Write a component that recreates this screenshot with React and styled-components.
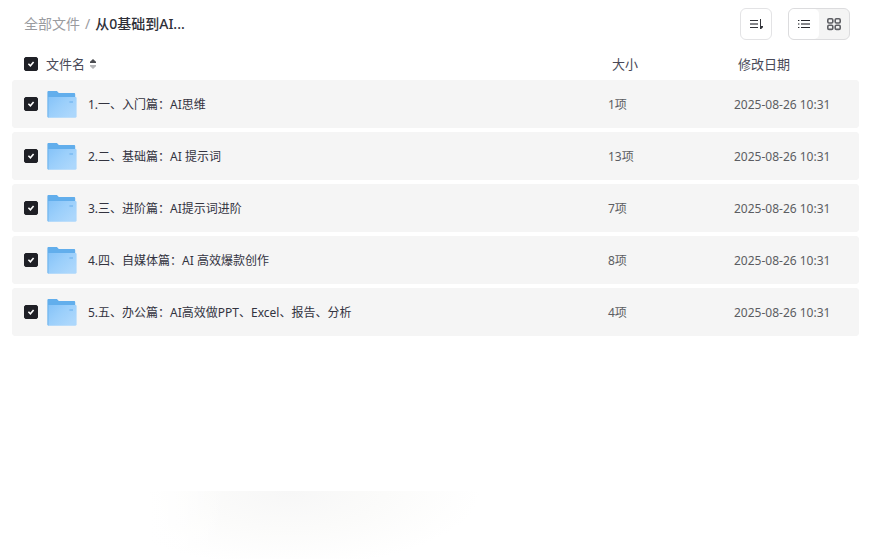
import React, { useState } from "react";
import styled, { createGlobalStyle } from "styled-components";

const FOLDERS = [
  { id: 1, name: "1.一、入门篇：AI思维", size: "1项", date: "2025-08-26 10:31" },
  { id: 2, name: "2.二、基础篇：AI 提示词", size: "13项", date: "2025-08-26 10:31" },
  { id: 3, name: "3.三、进阶篇：AI提示词进阶", size: "7项", date: "2025-08-26 10:31" },
  { id: 4, name: "4.四、自媒体篇：AI 高效爆款创作", size: "8项", date: "2025-08-26 10:31" },
  {
    id: 5,
    name: "5.五、办公篇：AI高效做PPT、Excel、报告、分析",
    size: "4项",
    date: "2025-08-26 10:31",
  },
];

const FolderIcon = () => (
  <svg width="32" height="32" viewBox="0 0 32 32" fill="none" aria-hidden="true">
    <defs>
      <linearGradient id="folderFront" x1="3" y1="9" x2="22" y2="30" gradientUnits="userSpaceOnUse">
        <stop stopColor="#86c3f8" />
        <stop offset="0.5" stopColor="#9bcffb" />
        <stop offset="1" stopColor="#acd7fc" />
      </linearGradient>
    </defs>
    <path
      d="M1.4 4.2C1.4 3.5 1.9 3 2.6 3H10.4C10.8 3 11.1 3.1 11.4 3.4L12.8 5H28C28.7 5 29.2 5.5 29.2 6.2V10H3V29.6H2.6C1.9 29.6 1.4 29.1 1.4 28.4V4.2Z"
      fill="#62aeec"
    />
    <path d="M2.4 9H29.7C30.2 9 30.6 9.4 30.6 9.9V28.5C30.6 29.2 30.1 29.7 29.4 29.7H2.4V9Z" fill="url(#folderFront)" />
    <path d="M23.4 13H27V15H23.4Z" fill="#84c0f4" />
  </svg>
);

const SortIcon = () => (
  <svg width="16" height="16" viewBox="0 0 16 16" fill="none" strokeWidth="1" aria-hidden="true">
    <path d="M2 4.5H10M2 11.5H10" stroke="#33343a" />
    <path d="M2 8H10" stroke="#85868a" strokeWidth="2" />
    <path d="M12.5 3V12.5" stroke="#33343a" />
    <path d="M12 13V10H15V11.2L13.2 13Z" fill="#33343a" />
  </svg>
);

const ListIcon = () => (
  <svg width="16" height="16" viewBox="0 0 16 16" fill="none" strokeWidth="1" aria-hidden="true">
    <path d="M2 4.5H3.4M5 4.5H14M2 11.5H3.4M5 11.5H14" stroke="#25262b" />
    <path d="M2 8H3.4M5 8H14" stroke="#85868a" strokeWidth="2" />
  </svg>
);

const GridIcon = () => (
  <svg width="16" height="16" viewBox="0 0 16 16" fill="none" stroke="#5e5f64" strokeWidth="1.6" aria-hidden="true">
    <rect x="1.8" y="2.8" width="5" height="4.2" rx="1.2" />
    <rect x="9.2" y="2.8" width="5" height="4.2" rx="1.2" />
    <rect x="1.8" y="9.2" width="5" height="4.2" rx="1.2" />
    <rect x="9.2" y="9.2" width="5" height="4.2" rx="1.2" />
  </svg>
);

const SortArrows = () => (
  <svg width="8" height="12" viewBox="0 0 8 12" aria-hidden="true">
    <path d="M4 1L7 3.8V5H1V3.8Z" fill="#4a4b50" />
    <path d="M4 11L7 8.2V7H1V8.2Z" fill="#b4b5b8" />
  </svg>
);

const App = () => {
  const [selected, setSelected] = useState(FOLDERS.map((folder) => folder.id));
  const [view, setView] = useState("list");

  const allSelected = selected.length === FOLDERS.length;

  const toggleAll = () => {
    setSelected(allSelected ? [] : FOLDERS.map((folder) => folder.id));
  };

  const toggleOne = (id) => {
    setSelected((prev) =>
      prev.includes(id) ? prev.filter((item) => item !== id) : [...prev, id]
    );
  };

  return (
    <>
      <GlobalStyle />
      <Page>
        <Toolbar>
          <Breadcrumb aria-label="路径">
            <CrumbLink href="#">全部文件</CrumbLink>
            <Slash>/</Slash>
            <Current>从0基础到AI...</Current>
          </Breadcrumb>
          <Actions>
            <SortButton type="button" aria-label="排序">
              <SortIcon />
            </SortButton>
            <ViewSwitch>
              <ViewButton
                type="button"
                aria-label="列表视图"
                $active={view === "list"}
                onClick={() => setView("list")}
              >
                <ListIcon />
              </ViewButton>
              <ViewButton
                type="button"
                aria-label="网格视图"
                $active={view === "grid"}
                onClick={() => setView("grid")}
              >
                <GridIcon />
              </ViewButton>
            </ViewSwitch>
          </Actions>
        </Toolbar>

        <FileTable>
          <thead>
            <tr>
              <HeadCell $width="34px" $pad="12px">
                <Checkbox
                  type="checkbox"
                  aria-label="全选"
                  checked={allSelected}
                  onChange={toggleAll}
                />
              </HeadCell>
              <HeadCell>
                <NameSort type="button">
                  文件名
                  <SortArrows />
                </NameSort>
              </HeadCell>
              <HeadCell $width="126px" $pad="4px">
                大小
              </HeadCell>
              <HeadCell $width="125px" $pad="4px">
                修改日期
              </HeadCell>
            </tr>
          </thead>
          <tbody>
            {FOLDERS.map((folder) => (
              <FileRow key={folder.id} $selected={selected.includes(folder.id)}>
                <Cell $pad="12px">
                  <Checkbox
                    type="checkbox"
                    id={`file-${folder.id}`}
                    checked={selected.includes(folder.id)}
                    onChange={() => toggleOne(folder.id)}
                  />
                </Cell>
                <Cell>
                  <FileName htmlFor={`file-${folder.id}`}>
                    <FolderIcon />
                    <span>{folder.name}</span>
                  </FileName>
                </Cell>
                <Cell>{folder.size}</Cell>
                <Cell>{folder.date}</Cell>
              </FileRow>
            ))}
          </tbody>
        </FileTable>

        <Glow />
      </Page>
    </>
  );
};

const GlobalStyle = createGlobalStyle`
  * {
    box-sizing: border-box;
  }

  body {
    margin: 0;
    background: #fff;
    font-family: "Noto Sans", "Noto Sans CJK SC", sans-serif;
    color: #25262b;
  }

  button {
    font-family: inherit;
    cursor: pointer;
  }
`;

const Page = styled.main`
  display: flex;
  flex-direction: column;
  min-height: 100vh;
`;

const Toolbar = styled.header`
  display: flex;
  align-items: center;
  justify-content: space-between;
  height: 48px;
  padding: 0 24px;
`;

const Breadcrumb = styled.nav`
  display: flex;
  align-items: center;
  gap: 5px;
  font-size: 14px;
  line-height: 20px;
`;

const CrumbLink = styled.a`
  color: #9a9b9f;
  text-decoration: none;
`;

const Slash = styled.span`
  color: #9a9b9f;
`;

const Current = styled.span`
  font-weight: 500;
  color: #2f3038;
`;

const Actions = styled.div`
  display: flex;
  align-items: center;
  gap: 16px;
`;

const SortButton = styled.button`
  display: flex;
  align-items: center;
  justify-content: center;
  width: 32px;
  height: 32px;
  padding: 0;
  border: 1px solid #e3e3e5;
  border-radius: 6px;
  background: #fff;
`;

const ViewSwitch = styled.div`
  display: flex;
  height: 32px;
  border: 1px solid #dcdcde;
  border-radius: 6px;
  background: #f4f4f4;
  overflow: hidden;
`;

const ViewButton = styled.button`
  display: flex;
  align-items: center;
  justify-content: center;
  width: 30px;
  padding: 0;
  border: none;
  border-radius: 5px;
  background: ${(props) => (props.$active ? "#fff" : "transparent")};
`;

const FileTable = styled.table`
  table-layout: fixed;
  width: calc(100% - 27px);
  margin-left: 12px;
  border-collapse: separate;
  border-spacing: 0 4px;
`;

const HeadCell = styled.th`
  width: ${(props) => props.$width || "auto"};
  height: 24px;
  padding: 0 0 0 ${(props) => props.$pad || "0"};
  font-size: 13px;
  line-height: 20px;
  font-weight: 400;
  text-align: left;
  color: #494957;
`;

const NameSort = styled.button`
  display: flex;
  align-items: center;
  gap: 4px;
  padding: 0;
  border: none;
  background: none;
  font-size: 13px;
  line-height: 20px;
  color: inherit;
`;

const FileRow = styled.tr`
  background: ${(props) => (props.$selected ? "#f5f5f5" : "#fff")};

  td:first-child {
    border-radius: 4px 0 0 4px;
  }

  td:last-child {
    border-radius: 0 4px 4px 0;
  }
`;

const Cell = styled.td`
  height: 48px;
  padding: 0 0 0 ${(props) => props.$pad || "0"};
  background: inherit;
  font-size: 12px;
  line-height: 21px;
  color: #5c5d62;
`;

const FileName = styled.label`
  display: flex;
  align-items: center;
  gap: 10px;
  color: #33333f;
  white-space: nowrap;
`;

const Checkbox = styled.input`
  appearance: none;
  display: block;
  width: 14px;
  height: 14px;
  margin: 0;
  border: 1px solid #c9c9cc;
  border-radius: 2px;
  background: #fff;
  cursor: pointer;

  &:checked {
    border-color: #1f2026;
    background: #1f2026
      url("data:image/svg+xml,%3Csvg xmlns='http://www.w3.org/2000/svg' viewBox='0 0 12 12' fill='none' stroke='white' stroke-width='1.6'%3E%3Cpath d='M3.4 5.8L5.4 7.8L8.6 4'/%3E%3C/svg%3E")
      center / 12px 12px no-repeat;
  }
`;

const Glow = styled.div`
  width: 336px;
  height: 68px;
  margin-top: auto;
  margin-left: 148px;
  background: linear-gradient(to right, #fff, transparent 80px),
    radial-gradient(
      ellipse 190px 76px at 142px 0,
      #f7f7f7 0%,
      #fbfbfa 50%,
      #ffffff 100%
    );
`;

export default App;
